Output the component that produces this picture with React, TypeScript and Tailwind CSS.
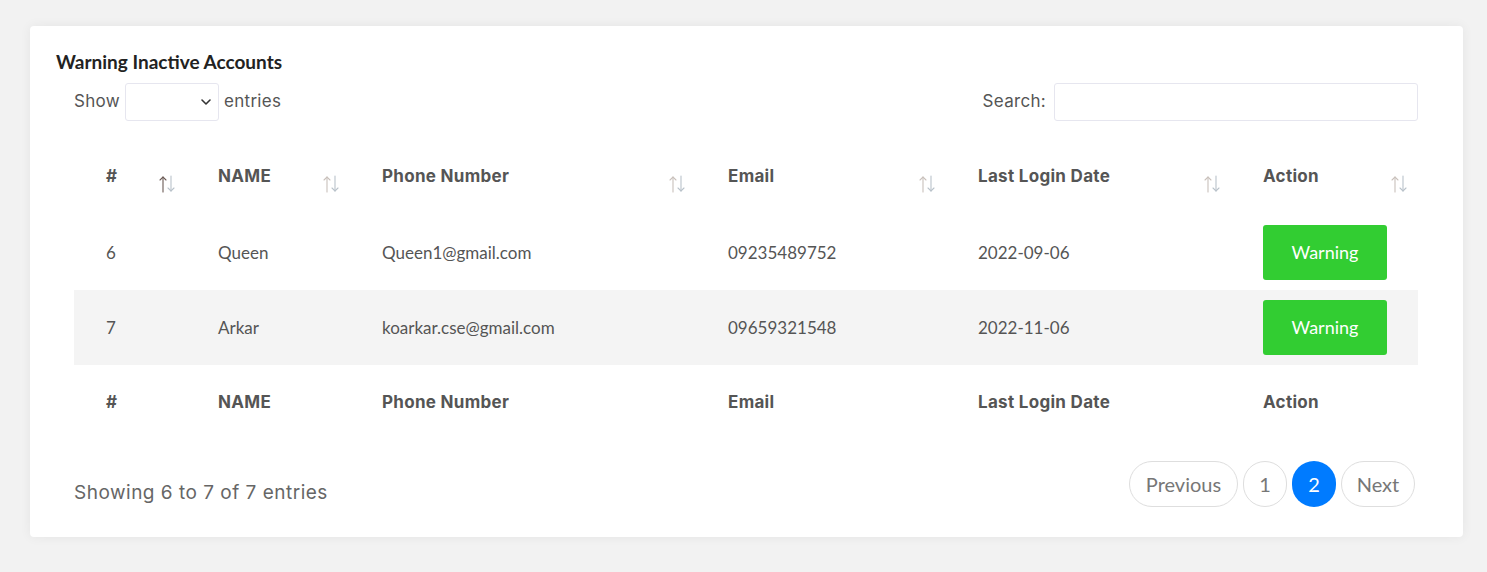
import React from 'react';

type Row = {
  id: number;
  name: string;
  phone: string;
  email: string;
  lastLogin: string;
};

const rows: Row[] = [
  { id: 6, name: 'Queen', phone: 'Queen1@gmail.com', email: '09235489752', lastLogin: '2022-09-06' },
  { id: 7, name: 'Arkar', phone: 'koarkar.cse@gmail.com', email: '09659321548', lastLogin: '2022-11-06' },
];

const columns = [
  { label: '#', width: 'w-[112px]' },
  { label: 'NAME', width: 'w-[164px]' },
  { label: 'Phone Number', width: 'w-[346px]' },
  { label: 'Email', width: 'w-[250px]' },
  { label: 'Last Login Date', width: 'w-[285px]' },
  { label: 'Action', width: 'w-[187px]' },
];

// little up/down arrow pair used by sortable headers
const SortIcon = ({ active }: { active?: boolean }) => (
  <svg width="20" height="18" viewBox="0 0 20 18" fill="none" strokeWidth="1.1" strokeLinecap="round">
    <g stroke={active ? '#6b5a55' : '#c9c0bb'}>
      <path d="M6 17V2" />
      <path d="M3 5L6 2l3 3" />
    </g>
    <g stroke="#b9c2ca">
      <path d="M14 1v15" />
      <path d="M11 13l3 3 3-3" />
    </g>
  </svg>
);

const headFont = "font-['Inter','Open_Sans',sans-serif]";
const bodyFont = "font-['Lato','Liberation_Sans',sans-serif]";

export default function App() {
  return (
    <div className="min-h-[572px] w-full bg-[#f2f2f2] pt-[26px] pl-[30px] pr-[24px] pb-[37px]">
      <div className="rounded-[4px] bg-white shadow-[0_0_12px_rgba(0,0,0,0.06)] pl-[26px] pr-[27px] pt-[24px] pb-[29px]">
        <h4 className={`${bodyFont} text-[19px] leading-[24px] font-bold text-[#222]`}>Warning Inactive Accounts</h4>

        <div className="pl-[18px] pr-[18px]">
          {/* length + search controls */}
          <div className={`${headFont} mt-[9px] flex items-center justify-between text-[17px] tracking-[0.3px] text-[#555]`}>
            <div className="flex items-center gap-[5px]">
              <span>Show</span>
              <div className="relative h-[38px] w-[94px] rounded-[3px] border border-[#e6e6ef] bg-white">
                <svg className="absolute right-[6px] top-[14px]" width="12" height="8" viewBox="0 0 12 8" fill="none">
                  <path d="M2 2l4 4 4-4" stroke="#333" strokeWidth="1.6" strokeLinecap="round" strokeLinejoin="round" />
                </svg>
              </div>
              <span>entries</span>
            </div>
            <div className="flex items-center gap-[8px]">
              <span>Search:</span>
              <div className="h-[38px] w-[364px] rounded-[3px] border border-[#e6e6ef] bg-white" />
            </div>
          </div>

          <table className="mt-[19px] w-full table-fixed border-collapse">
            <thead>
              <tr className="h-[75px]">
                {columns.map((col, i) => (
                  <th
                    key={col.label}
                    className={`${col.width} ${headFont} relative pl-[32px] text-left align-middle text-[17px] tracking-[0.3px] font-bold text-[#555]`}
                  >
                    <span className="relative -top-[1px]">{col.label}</span>
                    <span className="absolute right-[9px] top-[35px]">
                      <SortIcon active={i === 0} />
                    </span>
                  </th>
                ))}
              </tr>
            </thead>
            <tbody className={`${bodyFont} text-[17px] text-[#555]`}>
              {rows.map((row, idx) => (
                <tr key={row.id} className={`h-[75px] ${idx % 2 === 1 ? 'bg-[#f4f4f4]' : 'bg-white'}`}>
                  <td className="pl-[32px] align-middle">{row.id}</td>
                  <td className="pl-[32px] align-middle">{row.name}</td>
                  <td className="pl-[32px] align-middle">{row.phone}</td>
                  <td className="pl-[32px] align-middle">{row.email}</td>
                  <td className="pl-[32px] align-middle">{row.lastLogin}</td>
                  <td className="pl-[32px] align-middle">
                    <button className="flex h-[55px] w-[124px] items-center justify-center rounded-[3px] bg-[#32cd32] text-[18px] text-white">
                      Warning
                    </button>
                  </td>
                </tr>
              ))}
            </tbody>
            <tfoot>
              <tr className="h-[75px]">
                {columns.map(col => (
                  <th key={col.label} className={`${headFont} pl-[32px] text-left align-middle text-[17px] tracking-[0.3px] font-bold text-[#555]`}>
                    {col.label}
                  </th>
                ))}
              </tr>
            </tfoot>
          </table>

          {/* info + pagination */}
          <div className="mt-[21px] flex items-start justify-between">
            <div className={`${headFont} mt-[18px] text-[19px] tracking-[0.5px] text-[#666]`}>Showing 6 to 7 of 7 entries</div>
            <div className={`${bodyFont} mr-[3px] flex items-center gap-[5px] text-[20px] text-[#777]`}>
              <button className="flex h-[46px] w-[109px] items-center justify-center rounded-full border border-[#dedede]">
                Previous
              </button>
              <button className="flex h-[46px] w-[44px] items-center justify-center rounded-full border border-[#dedede]">
                1
              </button>
              <button className="flex h-[46px] w-[44px] items-center justify-center rounded-full bg-[#007bff] text-white">
                2
              </button>
              <button className="flex h-[46px] w-[74px] items-center justify-center rounded-full border border-[#dedede]">
                Next
              </button>
            </div>
          </div>
        </div>
      </div>
    </div>
  );
}
